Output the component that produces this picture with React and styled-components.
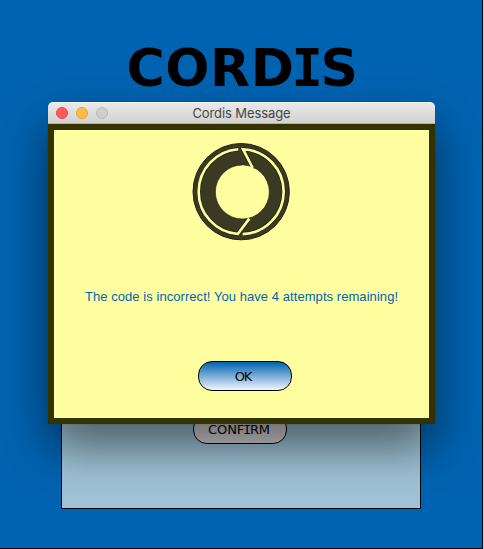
import React from "react";
import styled, { createGlobalStyle } from "styled-components";

const GlobalStyle = createGlobalStyle`
  * { box-sizing: border-box; }
  html, body { margin: 0; padding: 0; }
  body { overflow: hidden; background: #c8c8c8; }
`;

const Screen = styled.main`
  position: relative;
  width: 483px;
  height: 549px;
  padding-top: 39px;
  display: flex;
  flex-direction: column;
  align-items: center;
  background: #0063b1;
  border-right: 1px solid #000;
  border-bottom: 1px solid #000;
`;

const Heading = styled.h1`
  margin: 0;
  height: 58px;
  padding-left: 3px;
  font: bold 52px/58px "DejaVu Sans", sans-serif;
  letter-spacing: 0.6px;
  color: #000;
  white-space: nowrap;
`;

const SlabI = styled.span`
  font-family: "DejaVu Sans Mono", monospace;
  margin: 0 ${(p) => p.$trim}px;
`;

const Panel = styled.section`
  width: 360px;
  height: 389px;
  margin-top: 23px;
  padding-bottom: 64px;
  display: flex;
  align-items: flex-end;
  justify-content: center;
  background: #9fc4d7;
  border: 1px solid #000;
`;

const Button = styled.button`
  width: 94px;
  height: 30px;
  padding: 1px ${(p) => p.$shift}px 0 0;
  border: 1px solid #000;
  border-radius: 14px;
  background: ${(p) => p.$fill};
  color: #000;
  font: 13px/26px "DejaVu Sans", sans-serif;
  letter-spacing: ${(p) => p.$tracking}px;
  white-space: nowrap;
`;

const ConfirmButton = styled(Button)`
  margin-right: 2px;
`;

const Dialog = styled.div`
  position: absolute;
  left: 48px;
  top: 102px;
  width: 387px;
  height: 322px;
  border-radius: 5px 5px 0 0;
  box-shadow: 0 0 1px rgba(0, 0, 0, 0.4), 0 24px 48px rgba(0, 0, 0, 0.52);
`;

const TitleBar = styled.header`
  height: 22px;
  display: grid;
  grid-template-columns: 70px 1fr 70px;
  align-items: center;
  border-radius: 5px 5px 0 0;
  border-top: 1px solid #f6f6f6;
  border-bottom: 1px solid #b1afb0;
  background: linear-gradient(#e9e9e9, #d2d2d2);
`;

const Lights = styled.div`
  display: flex;
  gap: 8px;
  padding-left: 8px;
`;

const Light = styled.i`
  width: 12px;
  height: 12px;
  border-radius: 50%;
  border: 1px solid ${(p) => p.$edge};
  background: ${(p) => p.$fill};
`;

const Title = styled.span`
  text-align: center;
  font: 13px/20px Inter, sans-serif;
  letter-spacing: -0.1px;
  color: #464646;
  white-space: nowrap;
`;

const Body = styled.div`
  height: 300px;
  padding-top: 11px;
  display: flex;
  flex-direction: column;
  align-items: center;
  border: 6px solid #333300;
  background: #ffff9f;
`;

const Logo = styled.svg`
  display: block;
  flex: none;
  width: 100px;
  height: 100px;
  margin-right: 1px;
`;

const Message = styled.p`
  margin: 46px 0 54px;
  font: 13px/20px "Liberation Sans", sans-serif;
  letter-spacing: 0.06px;
  color: #0063b1;
  white-space: nowrap;
`;

const OkButton = styled(Button)`
  margin-left: 7px;
`;

function CordisLogo() {
  return (
    <Logo viewBox="33 33 300 300">
      <circle cx="183.5" cy="185" r="144.5" fill="#3b3924" stroke="#24230f" strokeWidth="3" />
      <circle cx="187" cy="186" r="81" fill="#ffff9f" stroke="#24230f" strokeWidth="2" />
      <path d="M187 105 L211 111 L202 88 L222 88 L225 117 Z" fill="#3b3924" />
      <path d="M211 110 L226 118 L222 135 L190 122 L187 106 Z" fill="#ffff9f" />
      <g fill="none" stroke="#24230f" strokeWidth="12">
        <path d="M176 57.7 A127.5 127.5 0 0 0 56 185 A127.5 127.5 0 0 0 173 312 L205 271" />
        <path d="M188 312.4 A127.5 127.5 0 0 0 311 185 A127.5 127.5 0 0 0 189 57.7 L214 106" />
      </g>
      <g fill="none" stroke="#ffff9f" strokeWidth="8">
        <path d="M175 57.7 A127.5 127.5 0 0 0 56 185 A127.5 127.5 0 0 0 173 312 L208 266" />
        <path d="M188 312.4 A127.5 127.5 0 0 0 311 185 A127.5 127.5 0 0 0 189 57.7 L218 114" />
      </g>
    </Logo>
  );
}

export default function App() {
  return (
    <>
      <GlobalStyle />
      <Screen>
        <Heading>
          CORD<SlabI $trim={-3}>I</SlabI>S
        </Heading>
        <Panel>
          <ConfirmButton $fill="linear-gradient(#dcdadf, #d8d5da)" $tracking={-0.1} $shift={2}>
            CONF<SlabI $trim={-1}>I</SlabI>RM
          </ConfirmButton>
        </Panel>
        <Dialog role="dialog">
          <TitleBar>
            <Lights>
              <Light $fill="#ff5b59" $edge="#e5484a" />
              <Light $fill="#ffbc45" $edge="#e0a03c" />
              <Light $fill="#cecece" $edge="#b9b9b9" />
            </Lights>
            <Title>Cordis Message</Title>
          </TitleBar>
          <Body>
            <CordisLogo />
            <Message>The code is incorrect! You have 4 attempts remaining!</Message>
            <OkButton $fill="linear-gradient(#0063b1, #f2f5fc)" $tracking={-1.2} $shift={4}>
              OK
            </OkButton>
          </Body>
        </Dialog>
      </Screen>
    </>
  );
}
